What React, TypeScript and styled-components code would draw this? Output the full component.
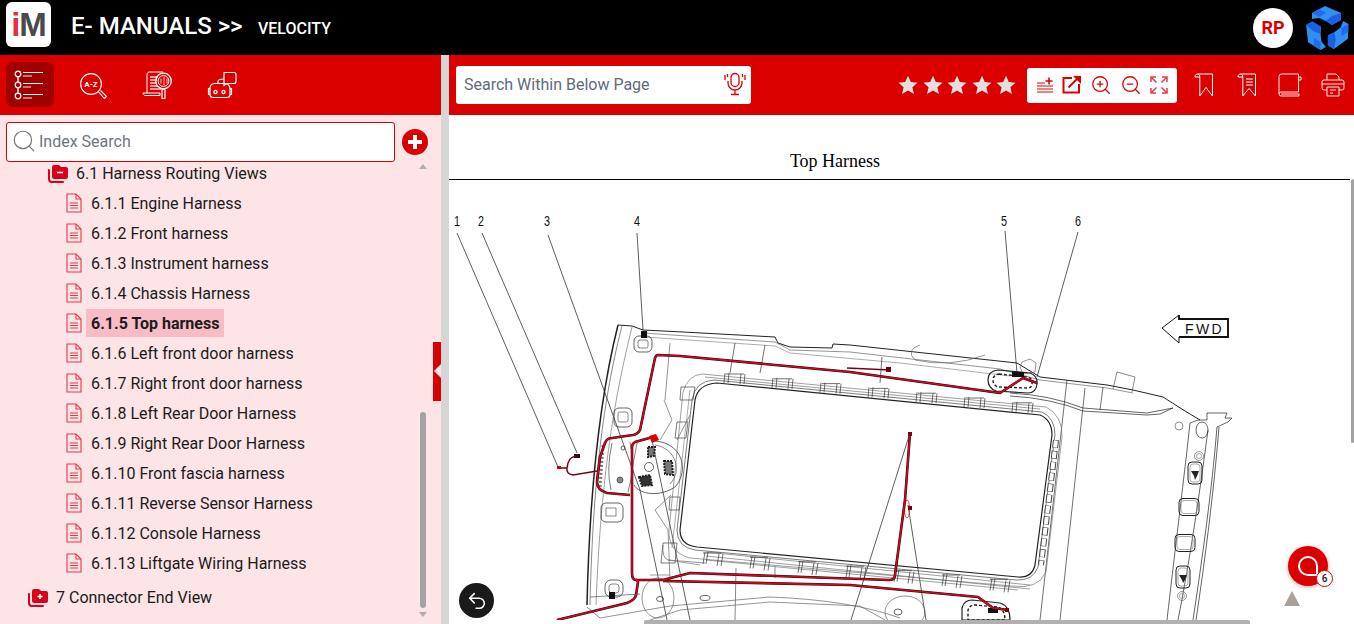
import styled, { createGlobalStyle } from "styled-components";
import { ZoomIn, ZoomOut, Undo2, Search } from "lucide-react";

const RED = "#db0000";

const GlobalStyle = createGlobalStyle`
  html, body {
    margin: 0;
    height: 100%;
    overflow: hidden;
    background: #fff;
    font-family: Roboto, "Liberation Sans", sans-serif;
  }
`;

const Page = styled.div`
  position: relative;
  width: 1354px;
  height: 624px;
  overflow: hidden;
  display: flex;
  flex-direction: column;
`;

const Header = styled.header`
  height: 55px;
  flex: none;
  background: #000;
  display: flex;
  align-items: center;
  padding: 0 4px 0 6px;
`;

const LogoTile = styled.div`
  width: 45px;
  height: 45px;
  margin-top: -7px;
  background: #fff;
  border-radius: 6px;
  display: flex;
  align-items: center;
  justify-content: center;
  font-family: "Liberation Sans", sans-serif;
  font-weight: 700;
  font-size: 33px;
  letter-spacing: -1px;
  line-height: 45px;
`;

const LogoI = styled.span`
  color: #e0304a;
`;

const LogoM = styled.span`
  color: #4a4a4a;
`;

const Title = styled.div`
  margin: -3px 0 0 20px;
  color: #fff;
  font-size: 24px;
  font-weight: 500;
  width: 187px;
  white-space: nowrap;
`;

const Subtitle = styled.div`
  margin-top: 2px;
  color: #fff;
  font-size: 16px;
  font-weight: 500;
`;

const HeaderRight = styled.div`
  margin-left: auto;
  display: flex;
  align-items: center;
  gap: 11px;
`;

const Avatar = styled.div`
  width: 40px;
  height: 40px;
  border-radius: 50%;
  background: #fff;
  color: ${RED};
  font-size: 18px;
  font-weight: 700;
  display: flex;
  align-items: center;
  justify-content: center;
`;

const Main = styled.div`
  flex: 1;
  min-height: 0;
  display: flex;
`;

const Side = styled.aside`
  width: 441px;
  flex: none;
  background: #fce4e7;
  display: flex;
  flex-direction: column;
`;

const Gutter = styled.div`
  width: 8px;
  flex: none;
  background: #d6d6d6;
`;

const SideBar = styled.div`
  height: 60px;
  flex: none;
  background: ${RED};
  display: flex;
  align-items: flex-start;
  padding: 7px 0 0 6px;
  box-sizing: border-box;
`;

const SideTab = styled.button<{ $active?: boolean }>`
  width: ${(p) => (p.$active ? 48 : 64)}px;
  height: 45px;
  flex: none;
  margin-right: ${(p) => (p.$active ? 8 : 0)}px;
  padding: 0;
  border: 0;
  border-radius: 7px;
  background: ${(p) => (p.$active ? "#a00000" : "transparent")};
  display: flex;
  align-items: center;
  justify-content: center;
`;

const IndexRow = styled.div`
  display: flex;
  align-items: center;
  padding: 7px 0 0 6px;
  gap: 7px;
`;

const IndexBox = styled.div`
  width: 389px;
  height: 40px;
  box-sizing: border-box;
  background: #fff;
  border: 1px solid ${RED};
  border-radius: 3px;
  display: flex;
  align-items: center;
  gap: 2px;
  padding: 0 0 2px 4px;
  color: #6c757d;
  font-size: 16px;
`;

const RoundAdd = styled.div`
  width: 26px;
  height: 26px;
  border-radius: 50%;
  background: ${RED};
  display: flex;
  align-items: center;
  justify-content: center;
`;

const Tree = styled.ul`
  list-style: none;
  margin: -1px 0 0;
  padding: 0;
  color: #1b1b1b;
  font-size: 16px;
`;

const TreeRow = styled.li<{ $indent: number; $gap: number; $height?: number; $after?: number }>`
  height: ${(p) => p.$height ?? 30}px;
  margin-bottom: ${(p) => p.$after ?? 0}px;
  display: flex;
  align-items: center;
  padding-left: ${(p) => p.$indent}px;
  gap: ${(p) => p.$gap}px;
  white-space: nowrap;
`;

const RowLabel = styled.span<{ $selected?: boolean }>`
  ${(p) =>
    p.$selected
      ? `
    font-weight: 700;
    background: #f7bcc6;
    margin-left: -5px;
    padding: 0 5px;
    height: 28px;
    line-height: 29px;
  `
      : ""}
`;

const Doc = styled.section`
  flex: 1;
  min-width: 0;
  display: flex;
  flex-direction: column;
`;

const DocBar = styled.div`
  height: 60px;
  flex: none;
  background: ${RED};
  display: flex;
  align-items: center;
  padding: 0 0 0 7px;
`;

const PageSearch = styled.div`
  width: 295px;
  height: 38px;
  flex: none;
  box-sizing: border-box;
  background: #fff;
  border-radius: 3px;
  display: flex;
  align-items: center;
  justify-content: space-between;
  padding: 0 5px 2px 8px;
  color: #5f6b7a;
  font-size: 16px;
`;

const Stars = styled.div`
  margin-left: auto;
  display: flex;
  gap: 4.5px;
`;

const ToolBox = styled.div`
  width: 150px;
  height: 35px;
  margin-left: 11px;
  background: #fff;
  border-radius: 3px;
  display: flex;
  align-items: center;
  justify-content: space-between;
  padding: 0 9px;
  box-sizing: border-box;
  color: ${RED};
`;

const OutlineIcons = styled.div`
  display: grid;
  grid-template-columns: repeat(4, 43px);
  justify-items: center;
  align-items: center;
  margin-left: 5px;
`;

const DocBody = styled.div`
  flex: 1;
  min-height: 0;
  overflow: hidden;
  background: #fff;
`;

const Heading = styled.h1`
  margin: 0;
  width: 901px;
  height: 65px;
  box-sizing: border-box;
  border-bottom: 1px solid #000;
  padding: 36px 129px 0 0;
  text-align: center;
  font: 400 18px/20px "Liberation Serif", serif;
  color: #000;
`;

const Plate = styled.svg`
  display: block;
  width: 905px;
  height: 440px;
`;

const Callout = styled.text`
  font: 400 15px "Liberation Sans", sans-serif;
  fill: #111;
`;

const FwdText = styled.text`
  font: 400 14px "Liberation Sans", sans-serif;
  letter-spacing: 2.4px;
  fill: #111;
`;

const ThumbV = styled.div<{ $x: number; $y: number; $h: number; $w: number }>`
  position: absolute;
  left: ${(p) => p.$x}px;
  top: ${(p) => p.$y}px;
  width: ${(p) => p.$w}px;
  height: ${(p) => p.$h}px;
  background: #a3a3a3;
  border-radius: 3px;
`;

const ScrollArrow = styled.div<{ $up?: boolean; $y: number }>`
  position: absolute;
  left: 419px;
  top: ${(p) => p.$y}px;
  width: 0;
  height: 0;
  border-left: 4px solid transparent;
  border-right: 4px solid transparent;
  ${(p) => (p.$up ? "border-bottom: 5px solid #b3adad;" : "border-top: 5px solid #b3adad;")}
`;

const Collapse = styled.div`
  position: absolute;
  left: 433px;
  top: 342px;
  width: 8px;
  height: 59px;
  background: ${RED};
  &::after {
    content: "";
    position: absolute;
    right: 0;
    top: 22px;
    border-top: 7px solid transparent;
    border-bottom: 7px solid transparent;
    border-right: 7px solid #fce4e7;
  }
`;

const BackBtn = styled.div`
  position: absolute;
  left: 459px;
  top: 583px;
  width: 35px;
  height: 35px;
  border-radius: 50%;
  background: #1a1a1a;
  color: #fff;
  display: flex;
  align-items: center;
  justify-content: center;
`;

const ChatFab = styled.div`
  position: absolute;
  left: 1288px;
  top: 546px;
  width: 40px;
  height: 40px;
  border-radius: 50%;
  background: ${RED};
  box-shadow: 0 1px 4px rgba(120, 0, 0, 0.35);
  display: flex;
  align-items: center;
  justify-content: center;
`;

const ChatBadge = styled.div`
  position: absolute;
  left: 28px;
  top: 24px;
  width: 15px;
  height: 15px;
  border-radius: 50%;
  background: #fff;
  border: 1px solid ${RED};
  color: #111;
  font-size: 10px;
  font-weight: 500;
  display: flex;
  align-items: center;
  justify-content: center;
`;

const TopArrow = styled.div`
  position: absolute;
  left: 1284px;
  top: 591px;
  border-left: 8px solid transparent;
  border-right: 8px solid transparent;
  border-bottom: 15px solid #a9a199;
`;

const ThumbH = styled.div`
  position: absolute;
  left: 644px;
  top: 620px;
  width: 606px;
  height: 4px;
  background: #b0b0b0;
  border-radius: 2px 2px 0 0;
`;

function TreeListIcon() {
  return (
    <svg width="32" height="32" viewBox="0 0 32 32" fill="none" stroke="#fff">
      <g strokeWidth="1.3">
        <circle cx="4" cy="5" r="2.800" />
        <circle cx="4" cy="16" r="2.800" />
        <circle cx="4" cy="27" r="2.800" />
        <path d="M4 8v5M4 19v5" />
      </g>
      <path d="M9 3.500h20M9 14.500h20M9 25.500h20" strokeWidth="1.200" />
      <path d="M9 7h9M9 18h8M9 29h9" strokeWidth="1.600" opacity=".6" />
    </svg>
  );
}

function AzIcon() {
  return (
    <svg width="32" height="32" viewBox="0 0 32 32" fill="none" stroke="#fff" strokeWidth="1.100">
      <circle cx="13" cy="15" r="10.400" />
      <path d="M20.500 23l6 6.500 2-2-6-6" />
      <text x="13" y="18" fontFamily="Roboto, sans-serif" fontWeight="700" fontSize="8" fill="#fff" stroke="none" textAnchor="middle">
        A-Z
      </text>
    </svg>
  );
}

function DocSearchIcon() {
  return (
    <svg width="32" height="32" viewBox="0 0 32 32" fill="none" stroke="#fff" strokeWidth="1">
      <path d="M7 3h14M7 3C5 3 5 6 5 7v17M1 24h17v2.500H3C1.500 26.500 1 25 1 24z" />
      <path d="M8 8h8M8 11h7M8 14h7M8 17h8M8 20h11" strokeWidth="1.600" opacity=".8" />
      <circle cx="21.500" cy="12" r="7.800" strokeWidth="1.300" />
      <circle cx="21.500" cy="12" r="5.400" />
      <path d="M19 9.500v5M22 8v8M25 9.500v5" strokeWidth=".8" />
      <path d="M20 20h3v9.500h-3z" strokeWidth="1.200" />
    </svg>
  );
}

function BotIcon() {
  return (
    <svg width="32" height="32" viewBox="0 0 32 32" fill="none" stroke="#fff" strokeWidth="1.200">
      <path d="M18 3.500h10a2 2 0 0 1 2 2v7a2 2 0 0 1-2 2h-7l-3 2z" />
      <path d="M12 14.500V12.500c0-1.500 2-2.500 6-2.500" />
      <path d="M8 14.500h11a5 5 0 0 1 5 5v6a3 3 0 0 1-3 3H7a3 3 0 0 1-3-3v-6a5 5 0 0 1 4-5zM4 19.500H2.500v6H4M24 19.500h1.500v6H24" />
      <circle cx="9.500" cy="23" r="1.600" />
      <circle cx="17.500" cy="23" r="1.600" />
    </svg>
  );
}

function FileIcon() {
  return (
    <svg width="16" height="20" viewBox="0 0 16 20" fill="none" stroke="#e23b48" strokeWidth="1.100" style={{ flex: "none" }}>
      <path d="M1 1h9l5 5v13H1z" />
      <path d="M10 1v5h5" />
      <path d="M4 10h8M4 12.500h8M4 15h8" strokeWidth="1" />
    </svg>
  );
}

function FolderIcon({ open }: { open?: boolean }) {
  return (
    <svg width="22" height="19" viewBox="0 0 22 19" style={{ flex: "none" }}>
      <path d="M2 6v9a3 3 0 0 0 3 3h11" fill="none" stroke="#d9001b" strokeWidth="2" strokeLinecap="round" />
      <path d="M5 3a2 2 0 0 1 2-2h5l2 2h5a2 2 0 0 1 2 2v8a2 2 0 0 1-2 2H7a2 2 0 0 1-2-2z" fill="#d9001b" />
      <path d={open ? "M10 8.500h6" : "M10.500 8.500h5M13 6v5"} stroke="#fff" strokeWidth="1.600" />
    </svg>
  );
}

function MicIcon() {
  return (
    <svg width="22" height="24" viewBox="0 0 22 24" fill="none" stroke={RED} strokeWidth="1.300">
      <rect x="7" y="1.500" width="8" height="13" rx="4" />
      <path d="M4 9v2a7 7 0 0 0 14 0V9M11 18v4M7 22.500h8" />
      <path d="M1 3v5M3.500 2v3M21 3v5M18.500 2v3" />
    </svg>
  );
}

function StarIcon() {
  return (
    <svg width="20" height="20" viewBox="0 0 20 20">
      <path d="M10 .8l2.800 6.300 6.700.6-5.100 4.500 1.600 6.800L10 15.400 4 19l1.600-6.800L.5 7.700l6.700-.6z" fill="#e0e0e0" />
    </svg>
  );
}

function AddLinesIcon() {
  return (
    <svg width="18" height="18" viewBox="0 0 18 18" fill="none" stroke={RED}>
      <path d="M1 7h8M1 10h16M1 13h16M1 16h16" strokeWidth="1" />
      <path d="M13 1.500v7M9.500 5h7" strokeWidth="1.600" />
    </svg>
  );
}

function OpenBoxIcon() {
  return (
    <svg width="19" height="18" viewBox="0 0 19 18" fill="none" stroke={RED} strokeWidth="2">
      <path d="M10 2H1.500v14.500H17V8" />
      <path d="M6.500 11.500l8.500-8.500" strokeWidth="1.800" />
      <path d="M11 0h8v8z" fill={RED} stroke="none" />
    </svg>
  );
}

function FullscreenIcon() {
  return (
    <svg width="18" height="18" viewBox="0 0 18 18" fill="none" stroke="#e23b48" strokeWidth="1.500">
      <path d="M1 6V1h5M12 1h5v5M17 12v5h-5M6 17H1v-5M2 2l4.500 4.500M16 2l-4.500 4.500M16 16l-4.500-4.500M2 16l4.500-4.500" />
    </svg>
  );
}

function RibbonIcon() {
  return (
    <svg width="20" height="24" viewBox="0 0 20 24" fill="none" stroke="#fff" strokeWidth="1">
      <path d="M1 4c0-2 1-3 3-3h14.500v22L12 14.500 5.800 23V4C5.800 2 4.500 1 4 1M1 4h4.800" />
    </svg>
  );
}

function RibbonLinesIcon() {
  return (
    <svg width="20" height="24" viewBox="0 0 20 24" fill="none" stroke="#fff" strokeWidth="1">
      <path d="M1 4c0-2 1-3 3-3h14.500v22L12 15.500 5.800 23V4C5.800 2 4.500 1 4 1M1 4h4.800" />
      <path d="M9 6h7M9 9h7M9 12h7" />
    </svg>
  );
}

function BookIcon() {
  return (
    <svg width="24" height="24" viewBox="0 0 24 24" fill="none" stroke="#fff" strokeWidth=".9">
      <path d="M20.500 1H3.500A2.500 2.500 0 0 0 1 3.500V21a2 2 0 0 0 2 2h18v-2H3M1 21a2 2 0 0 1 2-2h17.500V1" />
      <path d="M21 4h2v3h-2" />
    </svg>
  );
}

function PrinterIcon() {
  return (
    <svg width="24" height="24" viewBox="0 0 24 24" fill="none" stroke="#fff" strokeWidth=".9">
      <path d="M6 7V1h9l3 3v3" />
      <path d="M6 17H3a2 2 0 0 1-2-2V9a2 2 0 0 1 2-2h18a2 2 0 0 1 2 2v6a2 2 0 0 1-2 2h-3" />
      <path d="M1 11h22" />
      <path d="M6 14h12v9H6z" />
      <path d="M9 17h6M9 20h3" />
    </svg>
  );
}

function BrandArm({ angle }: { angle: number }) {
  return (
    <g transform={`rotate(${angle} 23 25)`}>
      <path d="M8 9 21 2 37 9V16L28 21 22 17 15 14 8 15Z" fill="#2f90f6" />
      <path d="M22 17 28 12 37 9V16L28 21Z" fill="#1b5fe4" />
      <path d="M8 9 15 13 22 9 15 5Z" fill="#1f6cea" />
    </g>
  );
}

function BrandMark() {
  return (
    <svg width="46" height="48" viewBox="0 0 46 48">
      <BrandArm angle={0} />
      <BrandArm angle={120} />
      <BrandArm angle={240} />
    </svg>
  );
}

const items = [
  "6.1.1 Engine Harness",
  "6.1.2 Front harness",
  "6.1.3 Instrument harness",
  "6.1.4 Chassis Harness",
  "6.1.5 Top harness",
  "6.1.6 Left front door harness",
  "6.1.7 Right front door harness",
  "6.1.8 Left Rear Door Harness",
  "6.1.9 Right Rear Door Harness",
  "6.1.10 Front fascia harness",
  "6.1.11 Reverse Sensor Harness",
  "6.1.12 Console Harness",
  "6.1.13 Liftgate Wiring Harness",
];

// tabs along the glass opening, page coordinates
const topTabs = [725, 773, 821, 869, 917, 965, 1013];
const bottomTabs = [705, 752, 800, 848, 896, 944, 992];
const callouts: [number, string][] = [
  [454, "1"],
  [478, "2"],
  [544, "3"],
  [634, "4"],
  [1001, "5"],
  [1075, "6"],
];
const pillarHoles: [number, number, number, number][] = [
  [1195, 473, 14, 22],
  [1189, 507, 20, 17],
  [1185, 543, 20, 17],
  [1183, 577, 14, 22],
];
const harnessRuns = [
  "M1037 383 1023 378 1000 393 850 372 680 356 658 355Q656 355 655 358L640 430Q638 434 633 435L612 438Q607 438 605 443L600 457 597 482Q597 490 607 493L630 495",
  "M632 573V447Q632 444 635 442L653 437",
  "M557 620 627 603Q635 600 636 595L638 582Q638 580 636 580",
  "M632 573Q632 580 636 580L663 580 690 573 889 580Q895 580 895 575L905 500 910 433",
  "M663 581 850 585 978 597 993 608 1008 610",
];

function HarnessDiagram() {
  return (
    <Plate viewBox="449 180 905 440" fill="none" stroke="#222" strokeWidth=".7">
      {/* callouts */}
      {callouts.map(([x, t]) => (
        <Callout key={t} x={x} y={226} stroke="none" textLength={6} lengthAdjust="spacingAndGlyphs">
          {t}
        </Callout>
      ))}
      <g strokeWidth=".8" stroke="#333">
        <path d="M457 233 558 467M482 233 577 453M548 235 640 490 667 620M652 440 690 620M637 233 643 330M1005 231 1017 373M1078 232 1037 377" />
        <path d="M910 433 851 620M908 505 926 620" />
      </g>

      {/* roof outline */}
      <path d="M618 325 632 326 643 330 683 332 775 337 778 343 790 347 832 348 833 344 850 345 1017 363 1040 377 1107 385 1133 390 1163 397 1185 411 1200 420" strokeWidth="1" />
      <path d="M643 333 775 342 790 350 850 352 1000 369 1040 380 1107 388 1133 393" stroke="#666" />
      <path d="M645 337 775 346 790 353 900 363 1010 376" stroke="#888" />
      <path d="M1020 367 1022 362 1030 359 1036 363 1035 372 1023 374z" stroke="#666" />
      <path d="M1113 389 1117 372 1135 377 1132 392" stroke="#555" />
      <path d="M1010 393Q1050 395 1083 408L1147 413 1173 408 1160 414 1147 415 1083 411Q1050 398 1010 396" />
      <path d="M618 325C603 385 590 470 587 605" strokeWidth="1.500" />
      <path d="M622 326C606 388 593 470 590 605" stroke="#555" />
      <path d="M632 327C616 392 601 470 596 605" stroke="#777" />
      <path d="M587 607 600 618" stroke="#555" />
      <path d="M600 618 670 606 770 597Q850 600 900 618M650 620 680 610 770 602 860 606 885 620" stroke="#666" />
      <path d="M736 568 735 620M775 566V578M590 597 640 594" stroke="#555" />
      <path d="M735 343 730 373M765 345 760 373M882 357 880 383M1067 380 1040 620M1085 388 1060 620M1103 387 1100 410" stroke="#333" />
      <path d="M1190 423C1185 470 1175 550 1167 620M1208 430C1200 490 1190 560 1178 620M1217 427C1212 490 1202 560 1193 620M1219 427C1214 490 1205 560 1196 620" />
      <path d="M1190 423 1198 420 1207 420 1207 413 1227 413 1225 418 1232 418 1228 422 1217 427" />
      <ellipse cx="1202" cy="430" rx="6" ry="8" />
      <circle cx="1179" cy="426" r="4" stroke="#666" />
      <circle cx="1199" cy="456" r="4.500" stroke="#666" />
      <circle cx="1199" cy="456" r="2.500" stroke="#888" />
      <circle cx="1182" cy="596" r="4.500" stroke="#666" />
      <circle cx="1182" cy="596" r="2.500" stroke="#888" />
      {pillarHoles.map(([x, y, w, h]) => (
        <g key={y}>
          <rect x={x - w / 2} y={y - h / 2} width={w} height={h} rx="4" strokeWidth="1" />
          <rect x={x - w / 2 + 2} y={y - h / 2 + 2} width={w - 4} height={h - 4} rx="3" stroke="#888" />
        </g>
      ))}
      <path d="M1191 471h8l-2 5-2 4-1-4zM1179 575h8l-2 5-2 3-1-3z" fill="#222" stroke="none" />

      {/* glass opening */}
      <path
        d="M717 383 1040 415Q1052 420 1052 435L1035 565Q1032 578 1018 577L697 547Q680 545 680 530L695 400Q698 384 717 383Z"
        strokeWidth="1.200"
        stroke="#222"
      />
      <path
        d="M714 380 1042 412Q1055 418 1055 435L1038 567Q1033 581 1016 580L695 550Q677 547 677 530L692 400Q695 381 714 380Z"
        stroke="#444"
      />
      <path
        d="M702 374 1046 407Q1063 416 1062 437L1046 572Q1038 590 1012 586L690 558Q668 552 669 530L683 392Q688 375 702 374Z"
        stroke="#777"
      />
      <path d="M705 377 1040 409M706 552 1030 585M706 556 1030 589M706 560 1018 590" stroke="#777" />
      {topTabs.map((x, i) => (
        <path key={x} d={`M${x} ${373 + i * 4.800}l-1 10m5-10-1 10m13-9-1 10m5-10-1 10m-18-10h18`} stroke="#333" />
      ))}
      {bottomTabs.map((x, i) => (
        <path key={x} d={`M${x} ${552 + i * 4.400}l-2 12m5-12-2 12m13-10-2 12m6-12-2 12m-18-13h18`} stroke="#333" />
      ))}
      <path d="M1056 440 1041 565" stroke="#444" strokeDasharray="8 3" strokeWidth="6" />
      <path d="M1056 440 1041 565" stroke="#fff" strokeDasharray="7 4" strokeDashoffset="-.5" strokeWidth="4" />
      <path d="M690 390 672 548" stroke="#888" />

      {/* clip blocks along the left side */}
      <path d="M681 387h14l-2 13h-13zM677 422h11l-2 16h-11zM670 497h10l-1 13h-10zM663 543h14l-2 20h-14z" stroke="#444" />
      <path d="M663 545Q662 558 668 560L705 563" stroke="#666" />
      <path d="M670 343 665 400M664 400 672 420 660 440" stroke="#666" />

      {/* clip recesses */}
      <rect x="634" y="336" width="18" height="16" rx="5" />
      <rect x="638" y="340" width="10" height="8" rx="2" stroke="#555" />
      <rect x="614" y="408" width="18" height="19" rx="5" />
      <rect x="618" y="412" width="10" height="10" rx="2" stroke="#555" />
      <rect x="601" y="503" width="22" height="19" rx="5" />
      <rect x="606" y="508" width="10" height="8" stroke="#555" />
      <rect x="605" y="580" width="18" height="17" rx="6" />
      <rect x="609" y="584" width="10" height="9" rx="3" stroke="#555" />
      <path d="M998 370 1030 373Q1038 376 1037 384 1036 393 1028 393L996 391Q988 388 988 380 988 371 998 370Z" strokeWidth="1.200" />
      <path d="M999 374 1028 377Q1033 379 1032 384 1032 388 1027 388L998 387Q993 385 993 380 993 375 999 374Z" strokeWidth="1.400" strokeDasharray="3 2" />
      <path d="M972 600 1000 603Q1010 606 1010 620H962V608Q964 600 972 600Z" strokeWidth="1.200" />
      <path d="M974 605 998 607Q1005 610 1005 620H968V610Q970 605 974 605Z" strokeWidth="1.400" strokeDasharray="3 2" />
      <path d="M915 360Q905 350 920 345M915 360Q950 368 985 355" stroke="#666" />
      <ellipse cx="905" cy="612" rx="20" ry="16" stroke="#666" />
      <ellipse cx="658" cy="598" rx="16" ry="20" stroke="#666" />
      <ellipse cx="705" cy="598" rx="5" ry="2.500" />
      <ellipse cx="660" cy="599" rx="3.500" ry="2.500" />
      <ellipse cx="898" cy="612" rx="4" ry="3" />

      {/* module housing, left */}
      <path d="M612 443Q606 470 611 490M630 442Q636 465 628 492" stroke="#444" />
      <path d="M603 445 600 487" strokeWidth="3" stroke="#777" strokeDasharray="2 2" />
      <path d="M655 441C682 443 690 470 675 487 660 497 640 495 634 485" />
      <path d="M655 445C675 448 683 470 670 484M637 443 632 470" stroke="#555" />
      <circle cx="649" cy="467" r="4.500" />
      <path d="M639 477 650 475 652 485 642 486z" fill="#333" stroke="#222" strokeWidth="2" strokeDasharray="2 1" />
      <path d="M648 447h7l-1 9-6 1zM664 461h8l1 14-8-1z" fill="#777" stroke="#222" strokeWidth="2" strokeDasharray="2 1" />
      <circle cx="620" cy="480" r="3" fill="#888" stroke="#333" />
      <circle cx="623" cy="448" r="2" />
      <path d="M671 495 655 510 668 530 670 580M690 415 677 440" stroke="#666" />
      <path d="M650 575h20M668 560 700 565" stroke="#777" />

      {/* black connectors */}
      <path d="M641 331h6v7h-6z" fill="#111" stroke="none" />
      <path d="M609 592h6v7h-6z" fill="#111" stroke="none" />
      <path d="M574 454h6v4h-6z" fill="#111" stroke="none" />
      <path d="M1012 372h12v5h-12z" fill="#111" stroke="none" />
      <path d="M988 608h10v5h-10z" fill="#111" stroke="none" />

      {/* harness */}
      <g stroke="#111" strokeWidth="2.600" strokeLinejoin="round">
        {harnessRuns.map((d) => (
          <path key={d} d={d} />
        ))}
      </g>
      <g stroke="#e0001a" strokeWidth="1.600" strokeLinejoin="round">
        {harnessRuns.map((d) => (
          <path key={d} d={d} />
        ))}
      </g>
      <path d="M847 368 890 370" stroke="#7a0010" strokeWidth="1.400" />
      <path d="M886 367h5v5h-5z" fill="#7a0010" stroke="none" />
      <path d="M558 468h9M578 456Q570 456 568 463L567 468Q566 474 573 475L597 471" stroke="#7a0010" strokeWidth="1.400" />
      <path d="M557 466h4v3h-4z" fill={RED} stroke="none" />
      <path d="M649 436l7-2 3 6-7 3z" fill={RED} stroke="none" />
      <ellipse cx="907" cy="509" rx="2.500" ry="9" stroke={RED} />
      <path d="M908 506h4v4h-4zM908 432h4v4h-4z" fill="#7a0010" stroke="none" />
      <path d="M1005 608h4v4h-4z" fill="#7a0010" stroke="none" />

      {/* forward arrow */}
      <path d="M1162 328 1179 315V319H1228V337H1179V343Z" fill="#fff" stroke="#111" strokeWidth="1" />
      <path d="M1179 315V319H1228V337H1179" stroke="#111" strokeWidth="1.800" />
      <FwdText x="1185" y="334" stroke="none">
        FWD
      </FwdText>
    </Plate>
  );
}

export default function App() {
  return (
    <Page>
      <GlobalStyle />
      <Header>
        <LogoTile>
          <LogoI>i</LogoI>
          <LogoM>M</LogoM>
        </LogoTile>
        <Title>E- MANUALS &gt;&gt;</Title>
        <Subtitle>VELOCITY</Subtitle>
        <HeaderRight>
          <Avatar>RP</Avatar>
          <BrandMark />
        </HeaderRight>
      </Header>
      <Main>
        <Side>
          <SideBar>
            <SideTab $active>
              <TreeListIcon />
            </SideTab>
            <SideTab>
              <AzIcon />
            </SideTab>
            <SideTab>
              <DocSearchIcon />
            </SideTab>
            <SideTab>
              <BotIcon />
            </SideTab>
          </SideBar>
          <IndexRow>
            <IndexBox>
              <Search size={26} strokeWidth={1.100} color="#777" />
              Index Search
            </IndexBox>
            <RoundAdd>
              <svg width="16" height="16" viewBox="0 0 16 16">
                <path d="M6 1h4v5h5v4h-5v5H6v-5H1V6h5z" fill="#fff" />
              </svg>
            </RoundAdd>
          </IndexRow>
          <Tree>
            <TreeRow $indent={47} $gap={7} $height={24} $after={3}>
              <FolderIcon open />
              <span>6.1 Harness Routing Views</span>
            </TreeRow>
            {items.map((item, i) => (
              <TreeRow key={item} $indent={66} $gap={9}>
                <FileIcon />
                <RowLabel $selected={i === 4}>{item}</RowLabel>
              </TreeRow>
            ))}
            <TreeRow $indent={27} $gap={7} $height={38}>
              <FolderIcon />
              <span>7 Connector End View</span>
            </TreeRow>
          </Tree>
        </Side>
        <Gutter />
        <Doc>
          <DocBar>
            <PageSearch>
              Search Within Below Page
              <MicIcon />
            </PageSearch>
            <Stars>
              <StarIcon />
              <StarIcon />
              <StarIcon />
              <StarIcon />
              <StarIcon />
            </Stars>
            <ToolBox>
              <AddLinesIcon />
              <OpenBoxIcon />
              <ZoomIn size={22} strokeWidth={1.400} />
              <ZoomOut size={22} strokeWidth={1.400} />
              <FullscreenIcon />
            </ToolBox>
            <OutlineIcons>
              <RibbonIcon />
              <RibbonLinesIcon />
              <BookIcon />
              <PrinterIcon />
            </OutlineIcons>
          </DocBar>
          <DocBody>
            <Heading>Top Harness</Heading>
            <HarnessDiagram />
          </DocBody>
        </Doc>
      </Main>
      <ScrollArrow $up $y={164} />
      <ThumbV $x={420} $y={412} $w={6} $h={196} />
      <ScrollArrow $y={612} />
      <Collapse />
      <ThumbV $x={1351} $y={179} $w={3} $h={264} />
      <ThumbH />
      <BackBtn>
        <Undo2 size={22} strokeWidth={1.700} />
      </BackBtn>
      <ChatFab>
        <svg width="24" height="24" viewBox="0 0 24 24" fill="none" stroke="#fff" strokeWidth="2">
          <path d="M12 3a9 9 0 0 1 9 9v9h-9a9 9 0 0 1 0-18z" />
        </svg>
        <ChatBadge>6</ChatBadge>
      </ChatFab>
      <TopArrow />
    </Page>
  );
}
